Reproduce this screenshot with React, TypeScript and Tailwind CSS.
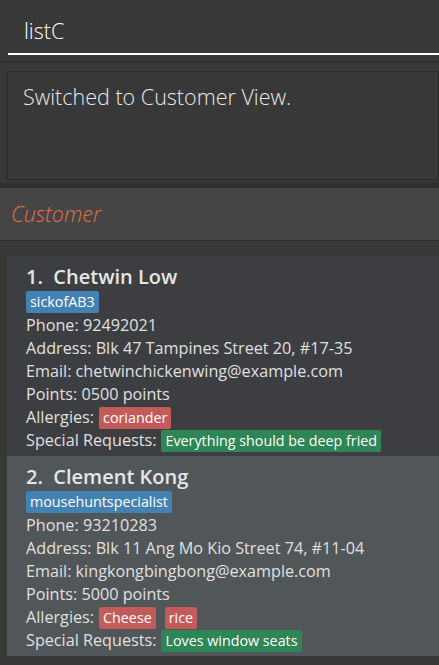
import React from "react";

type Customer = {
  name: string;
  tags: string[];
  phone: string;
  address: string;
  email: string;
  points: string;
  allergies: string[];
  requests: string[];
};

const customers: Customer[] = [
  {
    name: "Chetwin Low",
    tags: ["sickofAB3"],
    phone: "92492021",
    address: "Blk 47 Tampines Street 20, #17-35",
    email: "chetwinchickenwing@example.com",
    points: "0500",
    allergies: ["coriander"],
    requests: ["Everything should be deep fried"],
  },
  {
    name: "Clement Kong",
    tags: ["mousehuntspecialist"],
    phone: "93210283",
    address: "Blk 11 Ang Mo Kio Street 74, #11-04",
    email: "kingkongbingbong@example.com",
    points: "5000",
    allergies: ["Cheese", "rice"],
    requests: ["Loves window seats"],
  },
];

function Tag({ label, color }: { label: string; color: string }) {
  return (
    <span className={`inline-block h-[22px] rounded-[2px] px-[4px] text-[14.3px] leading-[22px] text-white ${color}`}>
      {label}
    </span>
  );
}

function CustomerCard({ c, index }: { c: Customer; index: number }) {
  const bg = index % 2 === 0 ? "bg-[#3c3e41]" : "bg-[#515658]";
  return (
    <div className={`${bg} pl-[19px] pt-[7px] pb-[4px]`}>
      <div className="text-[20px] font-semibold text-[#e6e6e6] leading-[28px]">
        {index + 1}.&nbsp;&nbsp;{c.name}
      </div>
      <div className="flex gap-[6px] h-[23px]">
        {c.tags.map((t) => (
          <Tag key={t} label={t} color="bg-[#4481b3]" />
        ))}
      </div>
      <div className="text-[16.2px] leading-[23px] text-[#e0e0e0]">
        <div>Phone: {c.phone}</div>
        <div>Address: {c.address}</div>
        <div>Email: {c.email}</div>
        <div>Points: {c.points} points</div>
        <div className="flex items-center h-[23px]">
          <span className="mr-[5px]">Allergies:</span>
          <div className="flex gap-[9px]">
            {c.allergies.map((a) => (
              <Tag key={a} label={a} color="bg-[#c35b5b]" />
            ))}
          </div>
        </div>
        <div className="flex items-center h-[23px]">
          <span className="mr-[5px]">Special Requests:</span>
          {c.requests.map((r) => (
            <Tag key={r} label={r} color="bg-[#2e8555]" />
          ))}
        </div>
      </div>
    </div>
  );
}

export default function App() {
  return (
    <div className="w-[439px] h-[665px] overflow-hidden bg-[#383838] flex flex-col font-['Open_Sans',sans-serif]">
      {/* Command box */}
      <div className="h-[61px] pl-[8px] pt-[9px] flex flex-col">
        <div className="h-[46px] pl-[16px] border-b-[2px] border-white flex items-center text-[21.5px] font-light text-white">
          listC
        </div>
      </div>
      <div className="h-[2px] bg-[#2f2f2f]" />

      {/* Result display */}
      <div className="h-[120px] pl-[7px] pt-[8px] pb-[3px]">
        <div className="h-full border border-[#2b2b2b] bg-[#383838] pl-[15px] pt-[9px] text-[21.5px] font-light text-[#e8e8e8]">
          Switched to Customer View.
        </div>
      </div>
      <div className="h-[5px] bg-[#2f2f2f]" />

      {/* Header */}
      <div className="h-[53px] bg-[#454545] border-b border-[#2d2d2d] flex items-center pl-[11px] text-[21.5px] font-light italic text-[#e2704a]">
        Customer
      </div>

      {/* List */}
      <div className="flex-1 pl-[7px] pt-[15px] flex flex-col">
        {customers.map((c, i) => (
          <CustomerCard key={c.name} c={c} index={i} />
        ))}
      </div>
    </div>
  );
}
